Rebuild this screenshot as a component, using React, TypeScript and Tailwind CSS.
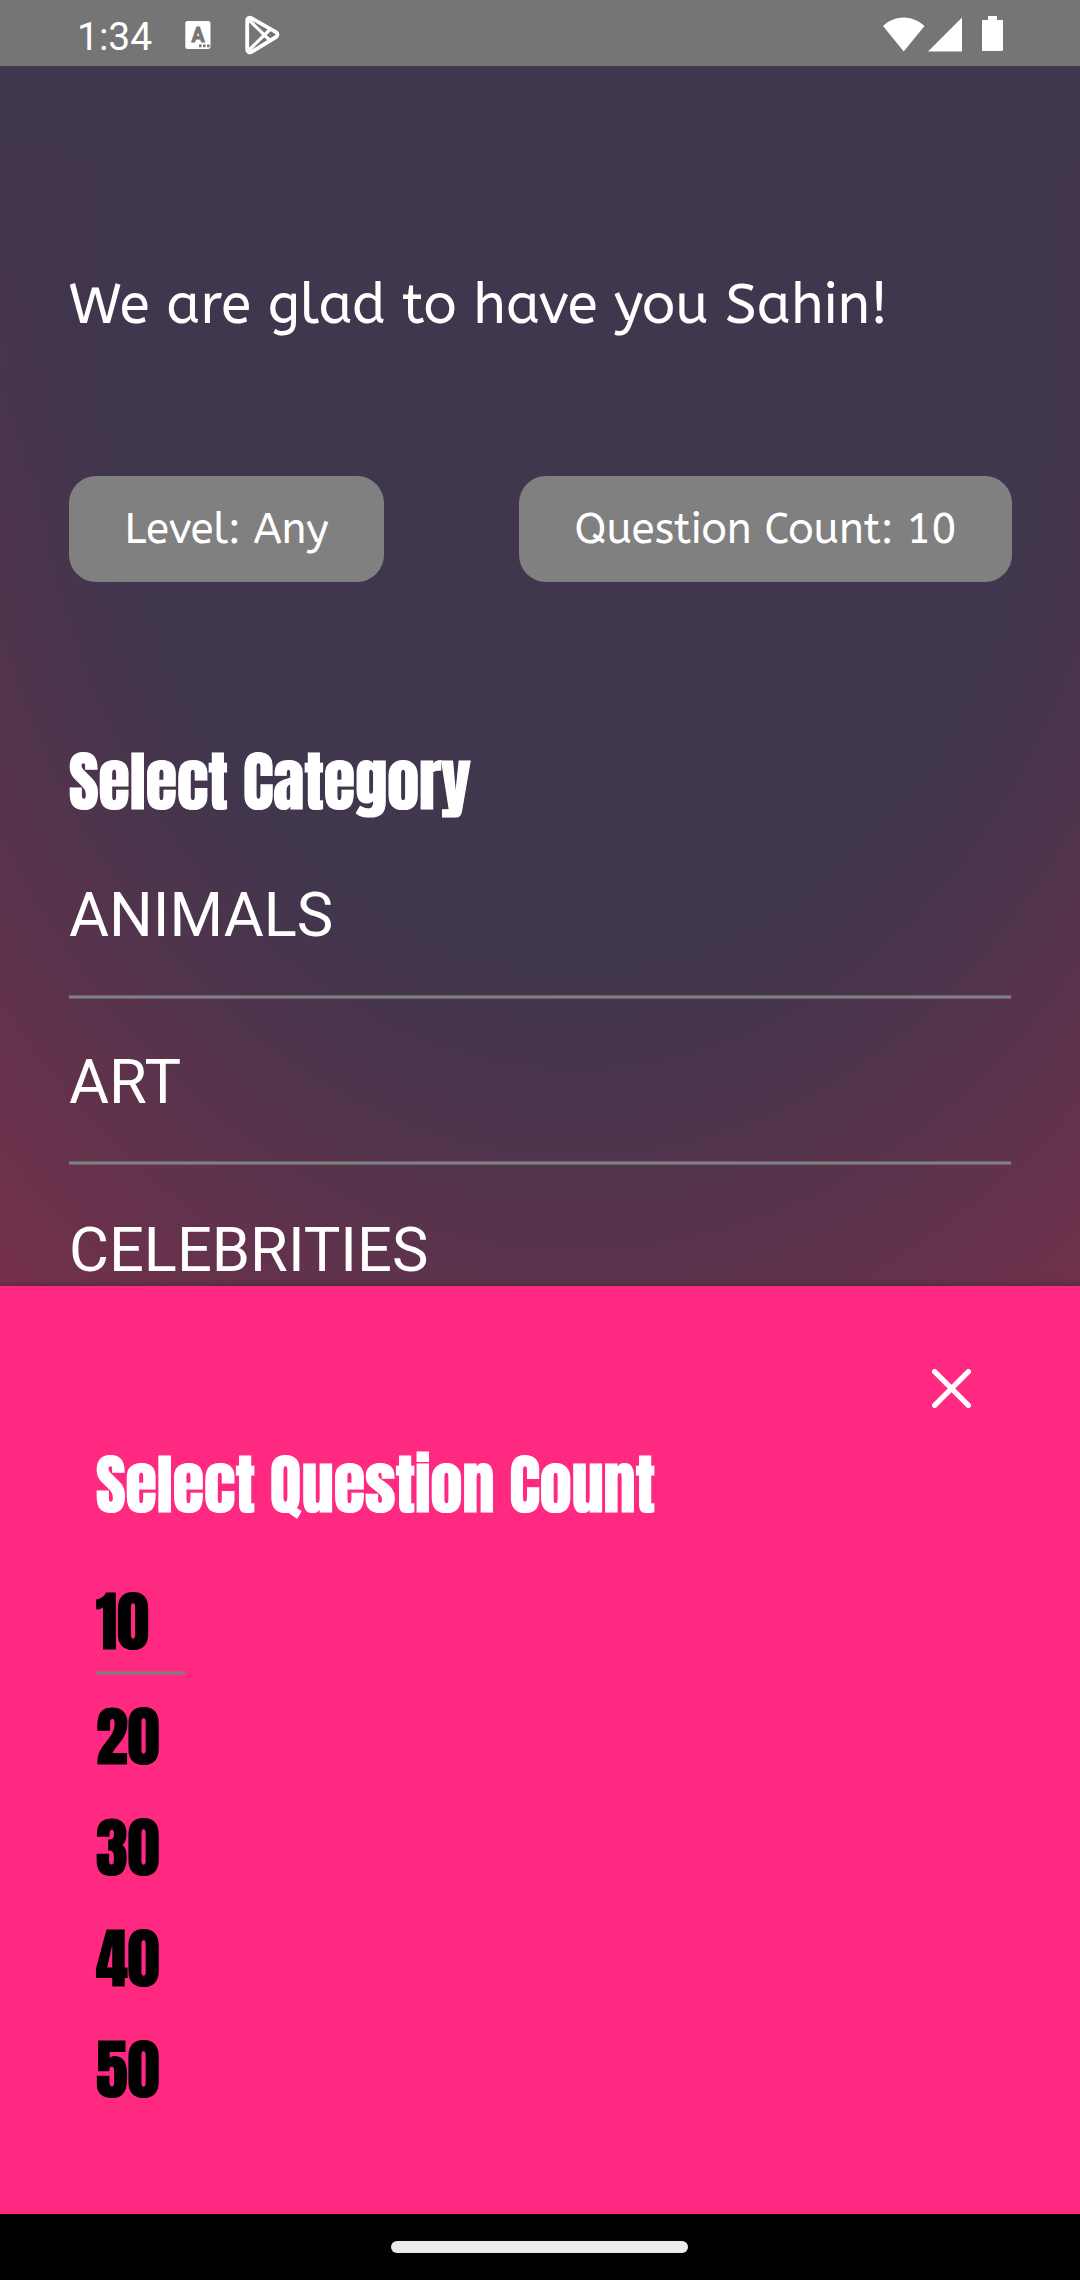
const categories = [
  { name: 'ANIMALS', row: 'h-[167px]', label: 'h-[144px]' },
  { name: 'ART', row: 'h-[168px]', label: 'h-[143px]' },
  { name: 'CELEBRITIES', row: 'h-[167px]', label: 'h-[144px]' },
];
const counts = ['20', '30', '40', '50'];

function AppBadgeIcon() {
  return (
    <svg viewBox="0 0 26 28" className="ml-[34px] h-7 w-[26px]">
      <rect x="0.3" y="0" width="25.2" height="28" rx="2.5" fill="#fff" />
      <text x="13" y="20.5" textAnchor="middle" fontSize="19.5" fill="#757575" stroke="#757575" strokeWidth="0.9" className="font-['Roboto',sans-serif] font-bold">A</text>
      <path d="M14 23.6h2.6v2.6h-2.6zM18 23.6h2.6v2.6H18zM22 23.6h2.6v2.6H22z" fill="#757575" />
    </svg>
  );
}

function PlayIcon() {
  return (
    <svg viewBox="0 0 36 40" className="ml-[33px] h-10 w-9" fill="none" stroke="#fff" strokeWidth="3.8" strokeLinejoin="round" strokeLinecap="round">
      <path d="M3.2 5.2C3.2 3 5.4 2 7.4 3.1L32 17.2c2 1.2 2 3.6 0 4.8L7.4 37c-2 1.1-4.2 0-4.2-2.2z" />
      <path d="M4 4l22 21.5M4 36l22-21.5" strokeWidth="3.2" />
    </svg>
  );
}

function StatusBar() {
  return (
    <div className="flex h-[66px] shrink-0 items-start bg-[#757575] text-white">
      <span className="ml-[77px] mt-[14px] w-[74px] whitespace-nowrap font-['Roboto',sans-serif] text-[39px] leading-[46px]">1:34</span>
      <span className="mt-[21px]"><AppBadgeIcon /></span>
      <span className="mt-[15px]"><PlayIcon /></span>
      <svg viewBox="0 0 124 40" className="ml-auto mr-[75px] mt-[15px] h-10 w-[124px]" fill="#fff">
        <path d="M2 11C14-.5 31-.5 43.5 11L22.7 36.5z" />
        <path d="M47 36.5L81 2.5v34z" />
        <path d="M107 1h9v4h5q1 0 1 1v29q0 1-1 1h-19q-1 0-1-1V6q0-1 1-1h5z" />
      </svg>
    </div>
  );
}

function Divider() {
  return <div className="h-1 border-y border-[#808080]/60 bg-[#808080] bg-clip-padding" />;
}

export default function App() {
  return (
    <div className="flex h-[2280px] w-[1080px] flex-col overflow-hidden bg-black">
      <StatusBar />
      <main className="h-[1220px] shrink-0 overflow-hidden bg-[linear-gradient(to_bottom,#40364d_60px,#40364d00_440px),radial-gradient(507px_670px_at_578px_274px,#40364d_0%,#40364d_94%,#45354d_104%,#5a334c_137%,#73304b_178%,#7e3048_193%)] px-[69px] text-white">
        <h1 className="mt-[203px] whitespace-nowrap font-['ABeeZee','Open_Sans',sans-serif] text-[55.4px] leading-[72px]">We are glad to have you Sahin!</h1>
        <div className="-mr-px mt-[135px] flex justify-between font-['ABeeZee','Open_Sans',sans-serif] text-[42.2px] leading-none">
          <button className="flex h-[106px] w-[315px] items-center justify-center whitespace-nowrap rounded-[27px] bg-[#808080]">Level: Any</button>
          <button className="flex h-[106px] w-[493px] items-center justify-center whitespace-nowrap rounded-[27px] bg-[#808080]">Question Count: 10</button>
        </div>
        <h2 className="mt-[150px] whitespace-nowrap font-['Anton','Roboto',sans-serif] text-[64px] font-normal leading-[100px] [-webkit-text-stroke:1.2px_#fff]">Select Category</h2>
        <ul className="mt-[19px] font-['Roboto',sans-serif] text-[61.4px] leading-[128px]">
          {categories.map((category) => (
            <li key={category.name} className={category.row}>
              <div className={category.label}>{category.name}</div>
              <Divider />
            </li>
          ))}
        </ul>
      </main>
      <section className="relative flex h-[928px] shrink-0 flex-col bg-[#ff2982] px-24 shadow-[0_-1px_6px_rgba(0,0,0,0.25)]">
        <button className="mr-[13px] mt-[82px] h-10 w-[39px] self-end">
          <svg viewBox="0 0 40 40" className="h-[39px] w-[39px]" stroke="#fff" strokeWidth="5.4" strokeLinecap="round">
            <path d="M2.7 2.7L37.3 37.3M37.3 2.7L2.7 37.3" />
          </svg>
        </button>
        <h2 className="mt-[27px] whitespace-nowrap font-['Anton','Roboto',sans-serif] text-[64.1px] font-normal leading-[100px] text-white [-webkit-text-stroke:1.2px_#fff]">Select Question Count</h2>
        <ul className="mt-[38px] font-['Anton','Roboto',sans-serif] text-[64px] font-normal leading-[98px] text-black [-webkit-text-stroke:1.2px_#000]">
          <li className="h-[115px] w-[89px]">
            <div className="h-[98px]">10</div>
            <Divider />
          </li>
          {counts.map((count) => (
            <li key={count} className="h-[111px]">{count}</li>
          ))}
        </ul>
      </section>
      <div className="flex grow items-center justify-center bg-black">
        <div className="mr-px h-3 w-[297px] rounded-full bg-[#ebebeb]" />
      </div>
    </div>
  );
}
